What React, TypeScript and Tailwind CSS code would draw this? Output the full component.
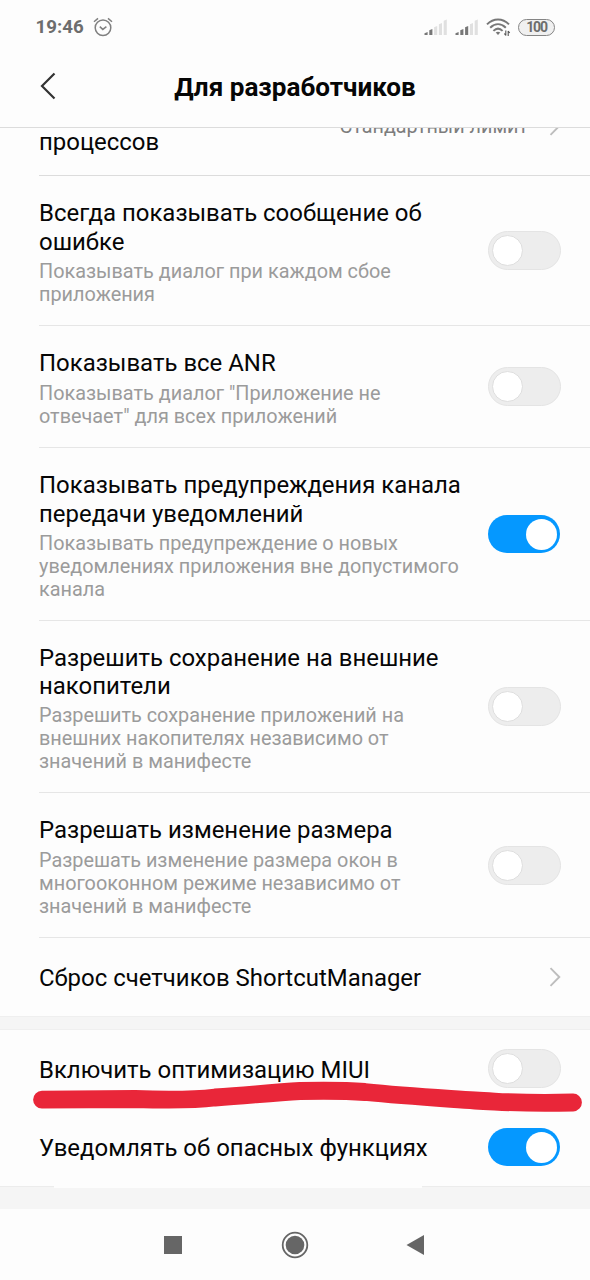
import { clsx } from 'clsx';

type Setting = {
  title: string[];
  summary?: string[];
  on?: boolean;
  arrow?: boolean;
  className: string;
};

const settings: Setting[] = [
  {
    title: ['Всегда показывать сообщение об', 'ошибке'],
    summary: ['Показывать диалог при каждом сбое', 'приложения'],
    className: 'h-[150px] border-b',
  },
  {
    title: ['Показывать все ANR'],
    summary: ['Показывать диалог "Приложение не', 'отвечает" для всех приложений'],
    className: 'h-[122px] border-b',
  },
  {
    title: ['Показывать предупреждения канала', 'передачи уведомлений'],
    summary: ['Показывать предупреждение о новых', 'уведомлениях приложения вне допустимого', 'канала'],
    on: true,
    className: 'h-[173px] border-b',
  },
  {
    title: ['Разрешить сохранение на внешние', 'накопители'],
    summary: ['Разрешить сохранение приложений на', 'внешних накопителях независимо от', 'значений в манифесте'],
    className: 'h-[172px] border-b',
  },
  {
    title: ['Разрешать изменение размера'],
    summary: ['Разрешать изменение размера окон в', 'многооконном режиме независимо от', 'значений в манифесте'],
    className: 'h-[145px] border-b',
  },
  {
    title: ['Сброс счетчиков ShortcutManager'],
    arrow: true,
    className: 'h-[78px]',
  },
];

const miuiSettings: Setting[] = [
  { title: ['Включить оптимизацию MIUI'], className: 'h-[77px]' },
  { title: ['Уведомлять об опасных функциях'], on: true, className: 'h-[80px]' },
];

function Toggle({ on }: { on?: boolean }) {
  return (
    <button
      role="switch"
      aria-checked={!!on}
      className={clsx(
        'flex shrink-0 items-center rounded-full',
        on
          ? 'mr-[30px] h-[38px] w-[72px] justify-end bg-[#0598ff] pr-[3px]'
          : 'mr-[29px] h-[39px] w-[73px] border border-[#e4e4e4] bg-[#ededed] pl-[3px]'
      )}
    >
      <span className={clsx('size-[31px] rounded-full bg-white', !on && 'border border-[#dedede]')} />
    </button>
  );
}

function Chevron({ className }: { className?: string }) {
  return (
    <svg className={clsx('h-5 w-3', className)} viewBox="0 0 12 20" fill="none" stroke="#bdbdbd" strokeWidth="1.9">
      <path d="M1.5 1.2 10.3 10 1.5 18.8" />
    </svg>
  );
}

function SettingRow({ title, summary, on, arrow, className }: Setting) {
  return (
    <div className={clsx('ml-[39px] flex items-center justify-between border-[#e6e6e6]', className)}>
      <div className={clsx('whitespace-nowrap', summary ? 'pt-[4px]' : 'pt-[3px]')}>
        {title.map((line) => (
          <div key={line} className="text-[23.95px] leading-[28.7px] text-[#060606]">{line}</div>
        ))}
        {summary && (
          <div className="mt-[3.5px] text-[19.85px] leading-[23px] text-[#9b9b9b]">
            {summary.map((line) => (
              <div key={line}>{line}</div>
            ))}
          </div>
        )}
      </div>
      {arrow ? <Chevron className="mr-[29px]" /> : <Toggle on={on} />}
    </div>
  );
}

function Signal({ level }: { level: number }) {
  return (
    <svg className="h-[17px] w-[23px]" viewBox="0 0 23 17">
      {[3, 6, 9, 12, 15.5].map((h, i) => (
        <path
          key={h}
          d={`M${0.5 + i * 4.8} 16V${17.2 - h}L${3.6 + i * 4.8} ${16 - h}V16Z`}
          fill={i < level ? '#777' : '#e0e0e0'}
        />
      ))}
    </svg>
  );
}

function StatusBar() {
  return (
    <div className="flex h-[54px] items-center pl-[35.5px] pr-[35px] text-[#6d6d6d]">
      <span className="w-[49px] pt-px text-[18.7px] font-bold leading-none">19:46</span>
      <svg className="ml-[8px] size-5" viewBox="0 0 20 20" fill="none" stroke="#808080" strokeWidth="1.5">
        <circle cx="10" cy="10.8" r="7.8" />
        <path d="M1 4.8 5 1.4M19 4.8 15 1.4M6.8 9.6 9.8 12.4 13.4 9.6" />
      </svg>
      <div className="ml-auto flex items-center">
        <Signal level={2} />
        <span className="w-2" />
        <Signal level={3} />
        <svg className="ml-[8px] h-[20px] w-[25px]" viewBox="0 0 25 20" fill="none" stroke="#777" strokeWidth="2">
          <path d="M1 7.400C7.500 .8 16.500 .8 23 7.400M4.200 10.800C9 6.200 15 6.200 19.800 10.800M7.400 13.900C10.400 11 13.600 11 16.600 13.900" />
          <path d="M9.700 15.600Q12 14 14.300 15.600L12 18Z" fill="#777" stroke="none" />
          <path d="M19.800 13.500V18.500M18.300 16.500 19.800 18.500M22.200 19V14M23.700 16 22.200 14" stroke="#555" strokeWidth="1.1" />
        </svg>
        <span className="ml-[7px] flex h-[17px] w-[37px] items-center justify-center rounded-full border-[1.5px] border-[#858585] bg-[#f0f0f0] text-[14px] font-bold leading-none tracking-[-1.2px]">
          100
        </span>
      </div>
    </div>
  );
}

export default function App() {
  return (
    <div className="relative flex h-[1280px] w-[590px] flex-col overflow-hidden bg-[#fdfdfd] font-[Roboto,sans-serif]">
      <StatusBar />
      <header className="flex h-[74px] items-center border-b border-[#dcdcdc] pb-[9px] pl-[40px]">
        <svg className="h-[28px] w-[16px]" viewBox="0 0 16 28" fill="none" stroke="#333" strokeWidth="2.2">
          <path d="M14.5 1.5 2 14 14.5 26.5" />
        </svg>
        <h1 className="flex-1 pr-[56px] pt-[2px] text-center text-[26.1px] font-bold leading-none text-[#060606]">Для разработчиков</h1>
      </header>

      {/* scrolled under the header */}
      <div className="flex h-[48px] items-end overflow-hidden">
        <div className="ml-[39px] flex h-[100px] flex-1 items-center border-b border-[#dcdcdc]">
          <span className="mt-[34px] text-[23.95px] leading-[28.7px] text-[#060606]">процессов</span>
          <span className="ml-auto pt-[2px] text-[19.8px] leading-[23px] text-[#7d7d7d]">Стандартный лимит</span>
          <Chevron className="ml-[21px] mr-[29px]" />
        </div>
      </div>

      {settings.map((item) => (
        <SettingRow key={item.title[0]} {...item} />
      ))}
      <div className="h-[14px] border-y border-[#efefef] bg-[#f5f5f5]" />
      {miuiSettings.map((item) => (
        <SettingRow key={item.title[0]} {...item} />
      ))}
      <div className="-mt-px h-[23px] border-t border-[#ececec] bg-[#f5f5f5]">
        <div className="-mt-px ml-[54px] h-[2px] w-[368px] bg-[#fdfdfd]" />
      </div>

      <nav className="flex flex-1 items-center pl-[164px]">
        <span className="size-[18px] bg-[#666]" />
        <svg className="ml-[99px] size-7" viewBox="0 0 28 28">
          <circle cx="14" cy="14" r="12.3" fill="none" stroke="#666" strokeWidth="1.8" />
          <circle cx="14" cy="14" r="9.3" fill="#666" />
        </svg>
        <svg className="ml-[97px] h-[20px] w-[18px]" viewBox="0 0 18 20">
          <path d="M0.5 10 18 0V20Z" fill="#666" />
        </svg>
      </nav>

      {/* hand-drawn marker stroke */}
      <svg className="pointer-events-none absolute left-0 top-[1070px] h-[50px] w-[590px]" viewBox="0 0 590 50" fill="none">
        <path
          d="M42 29.700C75 29.700 105 29 135 29C165 30 190 30.500 215 27.500C255 24.500 275 22.500 300 21C325 20.500 345 20.500 365 22C405 26 440 28 475 30.500C515 32.500 525 34 573 32.500"
          stroke="#e92639"
          strokeWidth="17.8"
          strokeLinecap="round"
          strokeLinejoin="round"
        />
      </svg>
    </div>
  );
}
